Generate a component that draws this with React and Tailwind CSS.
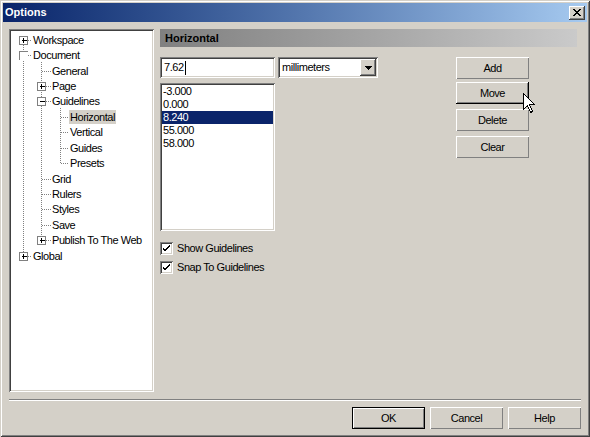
import React from "react";

const rows = [
  { t: "Workspace", l: 0, box: "+" },
  { t: "Document", l: 0, box: "open" },
  { t: "General", l: 1 },
  { t: "Page", l: 1, box: "+" },
  { t: "Guidelines", l: 1, box: "-" },
  { t: "Horizontal", l: 2, sel: true },
  { t: "Vertical", l: 2 },
  { t: "Guides", l: 2 },
  { t: "Presets", l: 2 },
  { t: "Grid", l: 1 },
  { t: "Rulers", l: 1 },
  { t: "Styles", l: 1 },
  { t: "Save", l: 1 },
  { t: "Publish To The Web", l: 1, box: "+" },
  { t: "Global", l: 0, box: "+" },
];

const RH = 15.43;
const cy = (i) => Math.round(1 + RH * i + 7.715) + 0.5;
const boxCx = [12, 30, 49];
const hDots = [
  [17, 21],
  [31, 40],
  [50, 58],
];

function TreeLines() {
  const D = { stroke: "#808080", strokeWidth: 1, strokeDasharray: "1 1", shapeRendering: "crispEdges" };
  return (
    <svg className="absolute left-[2px] top-[2px]" width="141" height="359">
      <line x1="12.5" y1={cy(0)} x2="12.5" y2={cy(14)} {...D} />
      <line x1="30.5" y1={cy(1) + 6} x2="30.5" y2={cy(13)} {...D} />
      <line x1="49.5" y1={cy(4) + 6} x2="49.5" y2={cy(8)} {...D} />
      {rows.map((r, i) => (
        <line key={"h" + i} x1={hDots[r.l][0]} y1={cy(i)} x2={hDots[r.l][1]} y2={cy(i)} {...D} />
      ))}
      {rows.map((r, i) => {
        if (!r.box) return null;
        const c = boxCx[r.l];
        const y = cy(i);
        if (r.box === "open") {
          return (
            <g key={"b" + i} shapeRendering="crispEdges">
              <rect x={c - 4} y={y - 4.5} width="9" height="9" fill="#ffffff" />
              <path d={`M${c - 3.5} ${y + 4} V${y - 4} H${c + 5}`} stroke="#808080" fill="none" />
            </g>
          );
        }
        return (
          <g key={"b" + i} shapeRendering="crispEdges">
            <rect x={c - 3.5} y={y - 4} width="8" height="8" fill="#ffffff" stroke="#808080" />
            <line x1={c - 1.5} y1={y} x2={c + 3.5} y2={y} stroke="#000" />
            {r.box === "+" && <line x1={c + 0.5} y1={y - 2.5} x2={c + 0.5} y2={y + 2.5} stroke="#000" />}
          </g>
        );
      })}
    </svg>
  );
}

function Tree() {
  const pads = ["pl-[21px]", "pl-[40px]", "pl-[58px]"];
  return (
    <div className="relative w-[145px] h-[363px] bg-white p-[2px] shadow-[inset_1px_1px_#808080,inset_-1px_-1px_#ffffff,inset_2px_2px_#404040,inset_-2px_-2px_#d4d0c8]">
      <TreeLines />
      <div className="relative pt-[1px]">
        {rows.map((r, i) => (
          <div key={i} className={`h-[15.43px] flex items-center ${pads[r.l]}`}>
            <span className={`px-[1px] h-[14px] leading-[14px] whitespace-nowrap ${r.sel ? "bg-[#d4d0c8]" : ""}`}>{r.t}</span>
          </div>
        ))}
      </div>
    </div>
  );
}

function Btn({ children, kind }) {
  const cls =
    kind === "hot"
      ? "shadow-[inset_-1px_-1px_#000000,inset_1px_1px_#ffffff,inset_-2px_-2px_#808080]"
      : kind === "def"
      ? "border border-black shadow-[inset_1px_1px_#ffffff,inset_-1px_-1px_#808080]"
      : "shadow-[inset_1px_1px_#ffffff,inset_-1px_-1px_#808080]";
  return (
    <div className={`w-[73px] h-[22px] flex items-center justify-center bg-[#d4d0c8] ${cls}`}>{children}</div>
  );
}

function Check({ label }) {
  return (
    <div className="flex items-center gap-[4px] h-[13px]">
      <div className="w-[13px] h-[13px] bg-white shadow-[inset_1px_1px_#808080,inset_-1px_-1px_#ffffff,inset_2px_2px_#404040,inset_-2px_-2px_#d4d0c8] flex items-center justify-center">
        <svg width="13" height="13" viewBox="0 0 13 13">
          <path d="M3 5.5 L5 7.5 L9.5 3 V5 L5 9.5 L3 7.5 Z" fill="#000" shapeRendering="crispEdges" />
        </svg>
      </div>
      <span className="whitespace-nowrap leading-[13px]">{label}</span>
    </div>
  );
}

export default function App() {
  const sunken =
    "shadow-[inset_1px_1px_#808080,inset_-1px_-1px_#ffffff,inset_2px_2px_#404040,inset_-2px_-2px_#d4d0c8]";
  return (
    <div className="relative w-[590px] h-[437px] bg-[#d4d0c8] p-[3px] flex flex-col text-[11px] tracking-[-0.45px] text-black font-['Liberation_Sans',Arial,sans-serif] shadow-[inset_1px_1px_#d4d0c8,inset_-1px_-1px_#404040,inset_2px_2px_#ffffff,inset_-2px_-2px_#808080]">
      {/* title bar */}
      <div className="h-[19px] flex items-center bg-linear-to-r from-[#0a246a] to-[#a6caf0] pl-[2px] pr-[2px]">
        <span className="text-white font-bold tracking-normal text-[11px]">Options</span>
        <div className="ml-auto w-[16px] h-[14px] bg-[#d4d0c8] flex items-center justify-center shadow-[inset_-1px_-1px_#404040,inset_1px_1px_#ffffff,inset_-2px_-2px_#808080]">
          <svg width="8" height="7" viewBox="0 0 8 7" shapeRendering="crispEdges">
            <path d="M0 0h2v1h1v1h2V1h1V0h2v1H7v1H6v1H5v1h1v1h1v1h1v1H6V6H5V5H3v1H2v1H0V6h1V5h1V4h1V3H2V2H1V1H0z" fill="#000" />
          </svg>
        </div>
      </div>

      {/* body */}
      <div className="flex flex-col px-[6px] pt-[7px]">
        <div className="flex gap-[6px]">
          <Tree />
          <div className="w-[417px] flex flex-col">
            <div className="h-[18px] flex items-center pl-[5px] bg-linear-to-r from-[#808080] to-[#cacaca]">
              <span className="font-bold tracking-normal text-[#000]">Horizontal</span>
            </div>
            <div className="flex mt-[10px]">
              <div className="w-[115px] flex flex-col">
                <div className={`h-[21px] bg-white ${sunken} flex items-center pl-[4px]`}>
                  <span>7.62</span>
                  <span className="w-[1px] h-[14px] bg-black ml-[1px]" />
                </div>
                <div className={`mt-[5px] h-[148px] bg-white ${sunken} p-[2px]`}>
                  {["-3.000", "0.000", "8.240", "55.000", "58.000"].map((v) => (
                    <div
                      key={v}
                      className={`h-[13px] leading-[13px] pl-[1px] ${v === "8.240" ? "bg-[#0a246a] text-white" : ""}`}
                    >
                      {v}
                    </div>
                  ))}
                </div>
                <div className="mt-[11px] flex flex-col gap-[6px]">
                  <Check label="Show Guidelines" />
                  <Check label="Snap To Guidelines" />
                </div>
              </div>
              <div className={`ml-[3px] w-[100px] h-[21px] bg-white ${sunken} flex items-center pl-[4px] pr-[2px]`}>
                <span>millimeters</span>
                <div className="ml-auto w-[16px] h-[17px] bg-[#d4d0c8] flex items-center justify-center shadow-[inset_-1px_-1px_#404040,inset_1px_1px_#ffffff,inset_-2px_-2px_#808080,inset_2px_2px_#d4d0c8]">
                  <svg width="7" height="4" viewBox="0 0 7 4" shapeRendering="crispEdges">
                    <path d="M0 0h7v1H6v1H5v1H4v1H3V3H2V2H1V1H0z" fill="#000" />
                  </svg>
                </div>
              </div>
              <div className="ml-[78px] flex flex-col">
                <Btn>Add</Btn>
                <div className="mt-[3px]">
                  <Btn kind="hot">Move</Btn>
                </div>
                <div className="mt-[5px]">
                  <Btn>Delete</Btn>
                </div>
                <div className="mt-[5px]">
                  <Btn>Clear</Btn>
                </div>
              </div>
            </div>
          </div>
        </div>
        <div className="mt-[7px] w-[572px] h-[2px] border-t border-t-[#808080] border-b border-b-white" />
        <div className="mt-[6px] flex justify-end gap-[5px]">
          <Btn kind="def">OK</Btn>
          <Btn>Cancel</Btn>
          <Btn>Help</Btn>
        </div>
      </div>

      {/* mouse cursor */}
      <svg className="absolute left-[523px] top-[93px]" width="13" height="21" viewBox="0 0 13 21" shapeRendering="crispEdges">
        <path d="M0.5 0.5 V16.5 L4.5 12.5 L7.5 19.5 L9.5 18.5 L6.5 11.5 H11.5 Z" fill="#ffffff" stroke="#000000" strokeWidth="1" />
      </svg>
    </div>
  );
}
